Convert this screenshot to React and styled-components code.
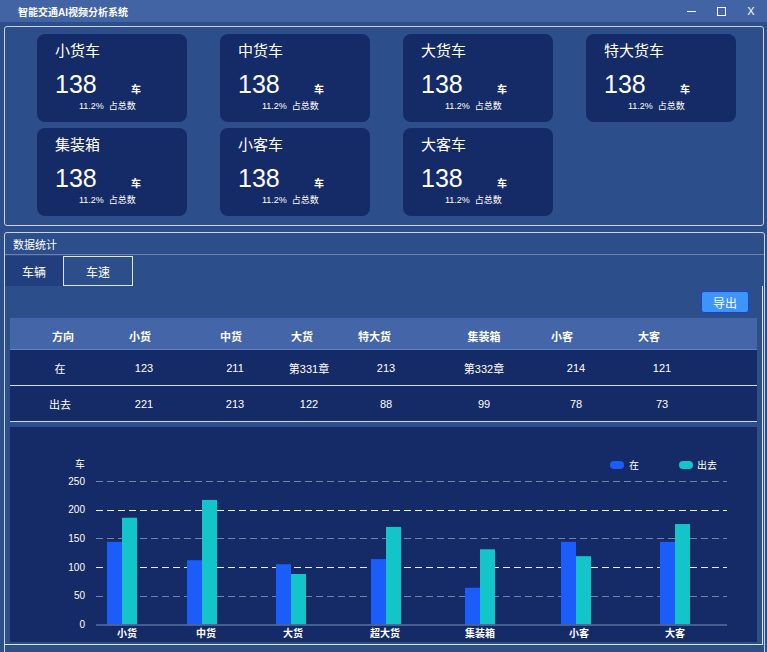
import React from 'react';
import styled, { createGlobalStyle } from 'styled-components';

const FONT = `"Liberation Sans", "Noto Sans CJK SC", sans-serif`;

const GlobalStyle = createGlobalStyle`
  html, body {
    margin: 0;
    padding: 0;
    background: #2c4e8b;
  }
  body {
    font-family: ${FONT};
    color: #ffffff;
  }
`;

const cards = ['小货车', '中货车', '大货车', '特大货车', '集装箱', '小客车', '大客车'];

const heads = ['方向', '小货', '中货', '大货', '特大货', '集装箱', '小客', '大客'];
const rows = [
  ['在', '123', '211', '第331章', '213', '第332章', '214', '121'],
  ['出去', '221', '213', '122', '88', '99', '78', '73'],
];
// column widths in px, header and body columns sit a little apart
const HEAD_W = [106, 48, 134, 8, 137, 82, 74, 100];
const BODY_W = [100, 68, 114, 34, 120, 76, 108, 64];

const chartData = [
  { name: '小货', x: 97, label: 117, inV: 144, outV: 186 },
  { name: '中货', x: 177, label: 196, inV: 112, outV: 217 },
  { name: '大货', x: 266, label: 283, inV: 105, outV: 88 },
  { name: '超大货', x: 361, label: 375, inV: 114, outV: 170 },
  { name: '集装箱', x: 455, label: 470, inV: 64, outV: 131 },
  { name: '小客', x: 551, label: 569, inV: 144, outV: 119 },
  { name: '大客', x: 650, label: 665, inV: 144, outV: 175 },
];

const Window = styled.div`
  width: 767px;
  height: 652px;
  overflow: hidden;
  background: #2c4e8b;
`;

const TitleBar = styled.div`
  height: 22px;
  background: #4264a5;
  display: flex;
  align-items: center;
  padding-left: 18px;
`;

const Title = styled.div`
  font-size: 10px;
  font-weight: bold;
  flex: 1;
`;

const Controls = styled.div`
  display: flex;
  padding-right: 1px;
`;

const Ctrl = styled.div`
  width: 30px;
  height: 22px;
  display: flex;
  align-items: center;
  justify-content: center;
  font-size: 11px;
`;

const Dash = styled.span`
  width: 9px;
  height: 1px;
  background: #fff;
`;

const Square = styled.span`
  width: 7px;
  height: 7px;
  border: 1px solid #fff;
`;

const Main = styled.div`
  padding: 4px 2px 0 4px;
  display: flex;
  flex-direction: column;
  gap: 6px;
`;

const SummaryPanel = styled.div`
  width: 760px;
  height: 200px;
  box-sizing: border-box;
  border: 1px solid #c8d2ea;
  border-radius: 3px;
  padding: 7px 0 0 32px;
`;

const CardGrid = styled.div`
  display: grid;
  grid-template-columns: repeat(4, 150px);
  grid-auto-rows: 88px;
  column-gap: 33px;
  row-gap: 6px;
`;

const Card = styled.div`
  background: #152b67;
  border-radius: 8px;
  padding: 7px 0 0 18px;
  box-sizing: border-box;
`;

const CardTitle = styled.div`
  font-size: 15px;
  line-height: 20px;
`;

const CountRow = styled.div`
  display: flex;
  align-items: baseline;
  margin-top: 9px;
  height: 28px;
`;

const Count = styled.span`
  width: 76px;
  font-size: 25px;
  line-height: 28px;
`;

const Unit = styled.span`
  font-size: 10px;
  font-weight: bold;
`;

const Share = styled.div`
  margin: 2px 0 0 24px;
  font-size: 9px;
  line-height: 12px;
  display: flex;
  gap: 5px;
`;

const StatsPanel = styled.div`
  width: 761px;
  height: 440px;
  box-sizing: border-box;
  border: 1px solid #c8d2ea;
  border-radius: 3px;
`;

const PanelHeader = styled.div`
  height: 22px;
  box-sizing: border-box;
  padding: 6px 0 0 8px;
  font-size: 11px;
  line-height: 13px;
  border-bottom: 1px solid #6e7fa2;
  margin-bottom: 1px;
`;

const Tabs = styled.div`
  display: flex;
  height: 30px;
`;

const Tab = styled.div`
  width: ${(p) => p.$w}px;
  box-sizing: border-box;
  display: flex;
  align-items: center;
  justify-content: center;
  font-size: 12px;
  background: ${(p) => (p.$active ? '#213f7e' : 'transparent')};
  border: ${(p) => (p.$active ? 'none' : '1px solid #dfe6f3')};
`;

const TabBody = styled.div`
  margin-right: 1px;
  border-right: 1px solid #dfe6f3;
  border-bottom: 1px solid #dfe6f3;
  padding: 5px 5px 2px 5px;
`;

const Toolbar = styled.div`
  display: flex;
  justify-content: flex-end;
  padding-right: 8px;
  margin-bottom: 5px;
`;

const ExportButton = styled.button`
  width: 48px;
  height: 22px;
  background: #3d95fc;
  border: 1px solid #1c3fcc;
  border-radius: 3px;
  color: #fff;
  font-family: ${FONT};
  font-size: 12px;
  padding: 0;
`;

const Table = styled.div`
  width: 747px;
`;

const HeadRow = styled.div`
  display: flex;
  height: 32px;
  box-sizing: border-box;
  padding-top: 4px;
  align-items: center;
  background: #4466a8;
  border-bottom: 1px solid #5f80c2;
  font-size: 11px;
  font-weight: bold;
`;

const BodyRow = styled.div`
  display: flex;
  height: 36px;
  box-sizing: border-box;
  padding-top: 1px;
  align-items: center;
  background: #152b67;
  border-bottom: 1px solid #d3dbec;
  font-size: 11px;
`;

const Cell = styled.div`
  flex: 0 0 ${(p) => p.$w}px;
  min-width: 0;
  display: flex;
  justify-content: center;
  white-space: nowrap;
`;

const ChartBox = styled.div`
  margin-top: 5px;
  width: 747px;
  height: 215px;
  background: #152b67;

  svg {
    display: block;
    font-family: ${FONT};
  }
`;

const BLUE = '#1a5dfb';
const TEAL = '#13c5c8';
const yOf = (v) => 197.5 - v * 0.574;

const Chart = () => {
  const ticks = [250, 200, 150, 100, 50];
  return (
    <svg width="747" height="215" viewBox="0 0 747 215">
      {ticks.map((t, i) => (
        <line
          key={t}
          x1="86"
          x2="717"
          y1={Math.round(yOf(t)) + 0.5}
          y2={Math.round(yOf(t)) + 0.5}
          stroke={i % 2 ? '#e9eef8' : '#7183ab'}
          strokeWidth="1"
          strokeDasharray="7 4"
        />
      ))}
      {[0, ...ticks].map((t) => (
        <text key={t} x="75" y={yOf(t) + 3.5} fill="#fff" fontSize="10" textAnchor="end">
          {t}
        </text>
      ))}
      <text x="70" y="41" fill="#fff" fontSize="10" textAnchor="middle">车</text>
      {chartData.map((d) => (
        <g key={d.name}>
          <rect x={d.x} y={yOf(d.inV)} width="15" height={197.5 - yOf(d.inV)} fill={BLUE} />
          <rect x={d.x + 15} y={yOf(d.outV)} width="15" height={197.5 - yOf(d.outV)} fill={TEAL} />
          <text x={d.label} y="210" fill="#fff" fontSize="10" fontWeight="bold" textAnchor="middle">
            {d.name}
          </text>
        </g>
      ))}
      <line x1="86" x2="717" y1="198" y2="198" stroke="#5a6e9c" strokeWidth="1.5" />
      <rect x="600" y="34" width="14" height="8" rx="4" fill={BLUE} />
      <text x="619" y="41.5" fill="#fff" fontSize="10">在</text>
      <rect x="669" y="34" width="14" height="8" rx="4" fill={TEAL} />
      <text x="687" y="41.5" fill="#fff" fontSize="10">出去</text>
    </svg>
  );
};

const App = () => (
  <>
    <GlobalStyle />
    <Window>
      <TitleBar>
        <Title>智能交通AI视频分析系统</Title>
        <Controls>
          <Ctrl><Dash /></Ctrl>
          <Ctrl><Square /></Ctrl>
          <Ctrl>X</Ctrl>
        </Controls>
      </TitleBar>
      <Main>
        <SummaryPanel>
          <CardGrid>
            {cards.map((name) => (
              <Card key={name}>
                <CardTitle>{name}</CardTitle>
                <CountRow>
                  <Count>138</Count>
                  <Unit>车</Unit>
                </CountRow>
                <Share>
                  <span>11.2%</span>
                  <span>占总数</span>
                </Share>
              </Card>
            ))}
          </CardGrid>
        </SummaryPanel>
        <StatsPanel>
          <PanelHeader>数据统计</PanelHeader>
          <Tabs>
            <Tab $active $w={58}>车辆</Tab>
            <Tab $w={70}>车速</Tab>
          </Tabs>
          <TabBody>
            <Toolbar>
              <ExportButton>导出</ExportButton>
            </Toolbar>
            <Table>
              <HeadRow>
                {heads.map((h, i) => (
                  <Cell key={h} $w={HEAD_W[i]}>{h}</Cell>
                ))}
              </HeadRow>
              {rows.map((r) => (
                <BodyRow key={r[0]}>
                  {r.map((c, i) => (
                    <Cell key={i} $w={BODY_W[i]}>{c}</Cell>
                  ))}
                </BodyRow>
              ))}
            </Table>
            <ChartBox>
              <Chart />
            </ChartBox>
          </TabBody>
        </StatsPanel>
      </Main>
    </Window>
  </>
);

export default App;
